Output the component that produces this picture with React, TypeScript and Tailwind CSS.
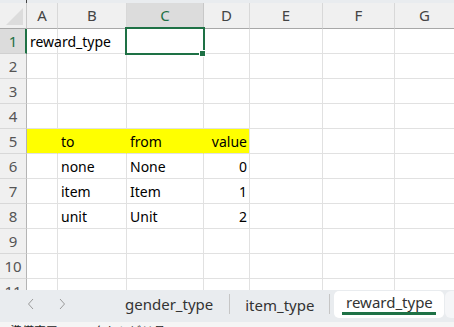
import React from "react";

const cols = ["A", "B", "C", "D", "E", "F", "G"];

type Cell = { text?: string; align?: "left" | "right"; yellow?: boolean };

const data: Record<number, Cell[]> = {
  1: [{ text: "reward_type" }, {}, {}, {}, {}, {}, {}],
  5: [
    { yellow: true },
    { text: "to", yellow: true },
    { text: "from", yellow: true },
    { text: "value", align: "right", yellow: true },
    {},
    {},
    {},
  ],
  6: [{}, { text: "none" }, { text: "None" }, { text: "0", align: "right" }, {}, {}, {}],
  7: [{}, { text: "item" }, { text: "Item" }, { text: "1", align: "right" }, {}, {}, {}],
  8: [{}, { text: "unit" }, { text: "Unit" }, { text: "2", align: "right" }, {}, {}, {}],
};

export default function App() {
  const rows = [1, 2, 3, 4, 5, 6, 7, 8, 9, 10, 11];
  return (
    <div className="w-[454px] h-[327px] overflow-hidden bg-white flex flex-col font-['Noto_Sans',sans-serif]">
      <div className="h-[3px] bg-[#e9ecef] relative shrink-0">
        <div className="absolute left-[26px] top-0 w-px h-[3px] bg-[#444]" />
      </div>
      <div className="h-[287px] overflow-hidden relative shrink-0">
        <div className="grid grid-cols-[27px_31px_69px_77px_46px_73px_72px_60px]">
          {/* corner */}
          <div className="h-[26px] bg-[#f0f0f0] border-r border-b border-r-[#c8c8c8] border-b-[#a8a8a8] relative">
            <div className="absolute right-[3px] bottom-[3px] w-0 h-0 border-l-[17px] border-l-transparent border-b-[17px] border-b-[#dcdcdc]" />
          </div>
          {cols.map((c) => (
            <div
              key={c}
              className={`h-[26px] flex items-center justify-center text-[15px] leading-none border-r border-b ${
                c === "C"
                  ? "bg-[#dcdcdc] text-[#1e7145] border-r-[#c8c8c8] border-b-[#1e7145]"
                  : "bg-[#f0f0f0] text-[#444] border-r-[#d8d8d8] border-b-[#a8a8a8]"
              }`}
            >
              {c}
            </div>
          ))}
          {rows.map((r) => {
            const cells = data[r] ?? [{}, {}, {}, {}, {}, {}, {}];
            return (
              <React.Fragment key={r}>
                <div
                  className={`h-[25px] flex items-center justify-center text-[15px] leading-none border-b ${
                    r === 1
                      ? "bg-[#dcdcdc] text-[#1e7145] border-r-2 border-r-[#1e7145] border-b-[#d0d0d0] pl-px"
                      : "bg-[#f0f0f0] text-[#555] border-r border-r-[#b4b4b4] border-b-[#d8d8d8]"
                  }`}
                >
                  {r}
                </div>
                {cells.map((cell, i) => (
                  <div
                    key={i}
                    className={`h-[25px] flex items-center whitespace-nowrap text-[14px] leading-none text-black border-r border-b border-b-[#e1e1e1] ${
                      cell.yellow ? "bg-[#ffff00]" : "bg-white"
                    } ${cell.yellow && i < 3 ? "border-r-[#ffff00]" : "border-r-[#e1e1e1]"} ${
                      cell.align === "right" ? "justify-end pr-[2px]" : "justify-start pl-[3px]"
                    } ${i === 0 && r === 1 ? "overflow-visible relative z-10" : "overflow-hidden"}`}
                  >
                    {cell.text && <span className="pt-[2px]">{cell.text}</span>}
                  </div>
                ))}
              </React.Fragment>
            );
          })}
        </div>
        {/* selection */}
        <div className="absolute left-[125px] top-[24px] w-[80px] h-[28px] border-2 border-[#1e7145] z-20" />
        <div className="absolute left-[199px] top-[47px] w-[7px] h-[7px] bg-[#1e7145] border border-white z-30" />
      </div>
      <div className="h-[32px] bg-[#e9ecef] shrink-0 flex items-start relative">
        <div className="flex items-center h-[28px] pl-[27px] gap-[23px] text-[#9a9a9a]">
          <svg width="8" height="12" viewBox="0 0 8 12">
            <polyline points="6,1 1.5,6 6,11" fill="none" stroke="currentColor" strokeWidth="1" />
          </svg>
          <svg width="8" height="12" viewBox="0 0 8 12">
            <polyline points="2,1 6.5,6 2,11" fill="none" stroke="currentColor" strokeWidth="1" />
          </svg>
        </div>
        <div className="flex items-center h-[28px] ml-[59px] text-[15px] text-[#333] leading-none whitespace-nowrap">
          <span className="pt-[1px]">gender_type</span>
          <div className="w-px h-[20px] bg-[#c6c6c6] ml-[16px] mr-[15px]" />
          <span className="pt-[2px]">item_type</span>
          <div className="w-px h-[20px] bg-[#c6c6c6] ml-[15px] mr-[4px]" />
          <div className="h-[27px] w-[110px] bg-white rounded-[5px] flex flex-col items-center justify-center">
            <span className="pt-[1px]">reward_type</span>
            <div className="w-[94px] h-[3px] bg-[#1e7145] mt-[2px]" />
          </div>
          <div className="h-[27px] w-[20px] bg-[#f5f6f8] rounded-l-[6px] ml-[1px]" />
        </div>
      </div>
      <div className="h-[5px] bg-[#f5f5f5] shrink-0 overflow-hidden relative">
        <div className="absolute left-[10px] top-[3px] text-[12px] leading-none text-[#222] whitespace-nowrap font-['Noto_Sans_CJK_JP',sans-serif]">
          準備完了　　アクセシビリティ
        </div>
      </div>
    </div>
  );
}
